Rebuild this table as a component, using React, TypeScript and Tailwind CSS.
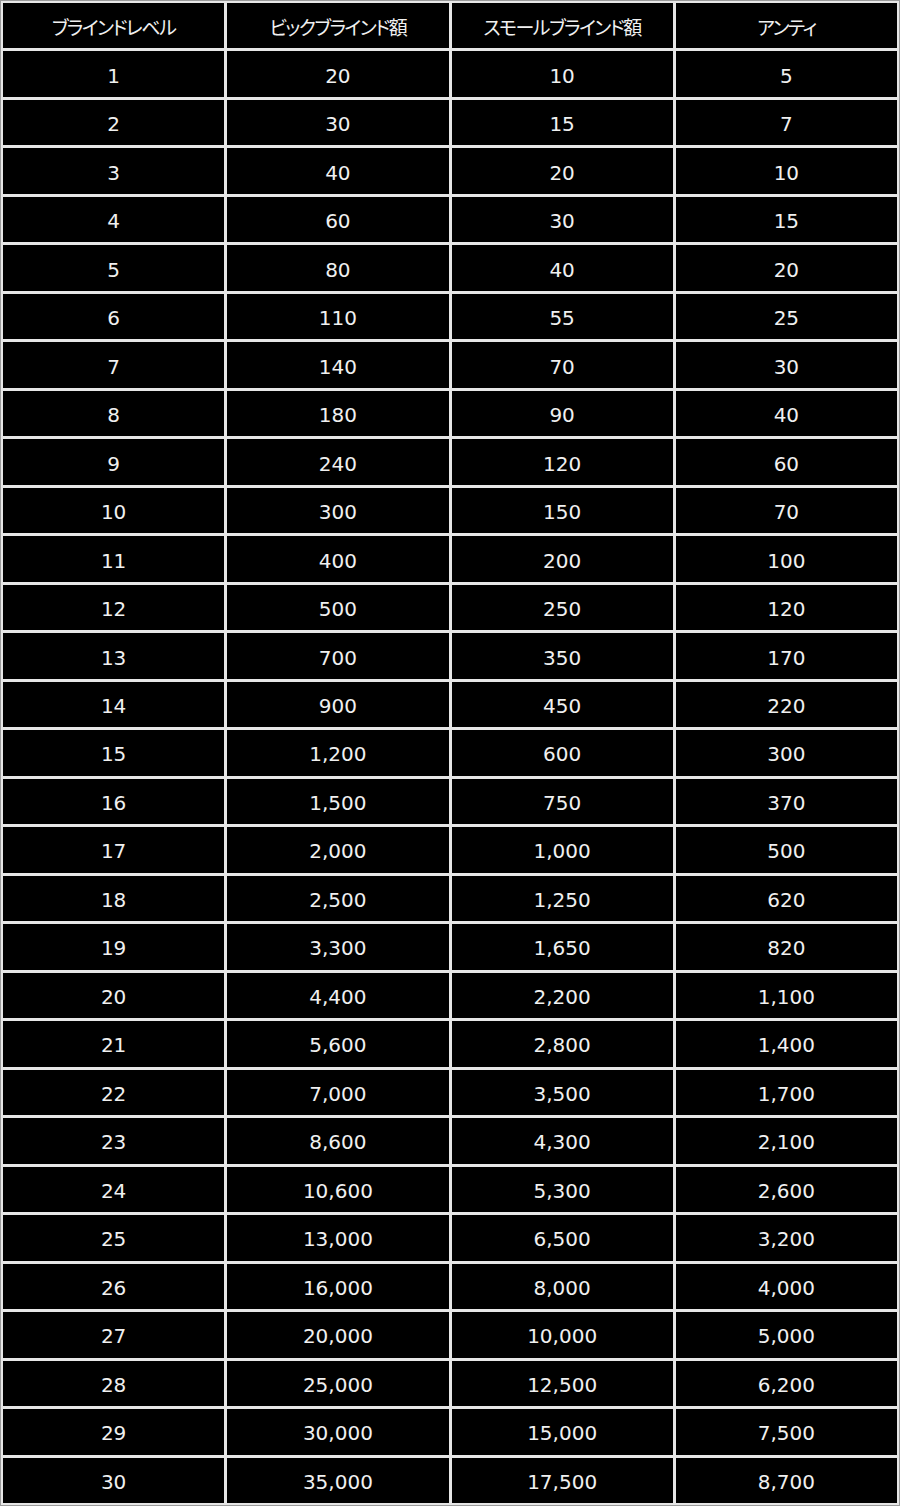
import React from "react";

const rows: [string, string, string, string][] = [
  ["1", "20", "10", "5"],
  ["2", "30", "15", "7"],
  ["3", "40", "20", "10"],
  ["4", "60", "30", "15"],
  ["5", "80", "40", "20"],
  ["6", "110", "55", "25"],
  ["7", "140", "70", "30"],
  ["8", "180", "90", "40"],
  ["9", "240", "120", "60"],
  ["10", "300", "150", "70"],
  ["11", "400", "200", "100"],
  ["12", "500", "250", "120"],
  ["13", "700", "350", "170"],
  ["14", "900", "450", "220"],
  ["15", "1,200", "600", "300"],
  ["16", "1,500", "750", "370"],
  ["17", "2,000", "1,000", "500"],
  ["18", "2,500", "1,250", "620"],
  ["19", "3,300", "1,650", "820"],
  ["20", "4,400", "2,200", "1,100"],
  ["21", "5,600", "2,800", "1,400"],
  ["22", "7,000", "3,500", "1,700"],
  ["23", "8,600", "4,300", "2,100"],
  ["24", "10,600", "5,300", "2,600"],
  ["25", "13,000", "6,500", "3,200"],
  ["26", "16,000", "8,000", "4,000"],
  ["27", "20,000", "10,000", "5,000"],
  ["28", "25,000", "12,500", "6,200"],
  ["29", "30,000", "15,000", "7,500"],
  ["30", "35,000", "17,500", "8,700"],
];

const headers = ["ブラインドレベル", "ビックブラインド額", "スモールブラインド額", "アンティ"];

export default function App() {
  return (
    <div className="w-[900px] h-[1506px] bg-white">
      <div className="w-[900px] h-[1506px] border border-[#9a9a9a] bg-[#e6e6e6] p-[2px] grid grid-cols-4 grid-rows-[repeat(31,minmax(0,1fr))] gap-[3px] text-[#f0f0f0]">
        {headers.map((h) => (
          <div
            key={h}
            className="bg-black flex items-center justify-center text-[19px] tracking-[-1.5px] [font-feature-settings:'palt'] pt-[3px]"
            style={{ fontFamily: '"Noto Sans CJK JP", "Noto Sans", sans-serif' }}
          >
            {h}
          </div>
        ))}
        {rows.map((r) =>
          r.map((c, i) => (
            <div
              key={r[0] + "-" + i}
              className="bg-black flex items-center justify-center text-[20px] pt-[3px]"
              style={{ fontFamily: '"DejaVu Sans", "Noto Sans", sans-serif' }}
            >
              {c}
            </div>
          ))
        )}
      </div>
    </div>
  );
}
